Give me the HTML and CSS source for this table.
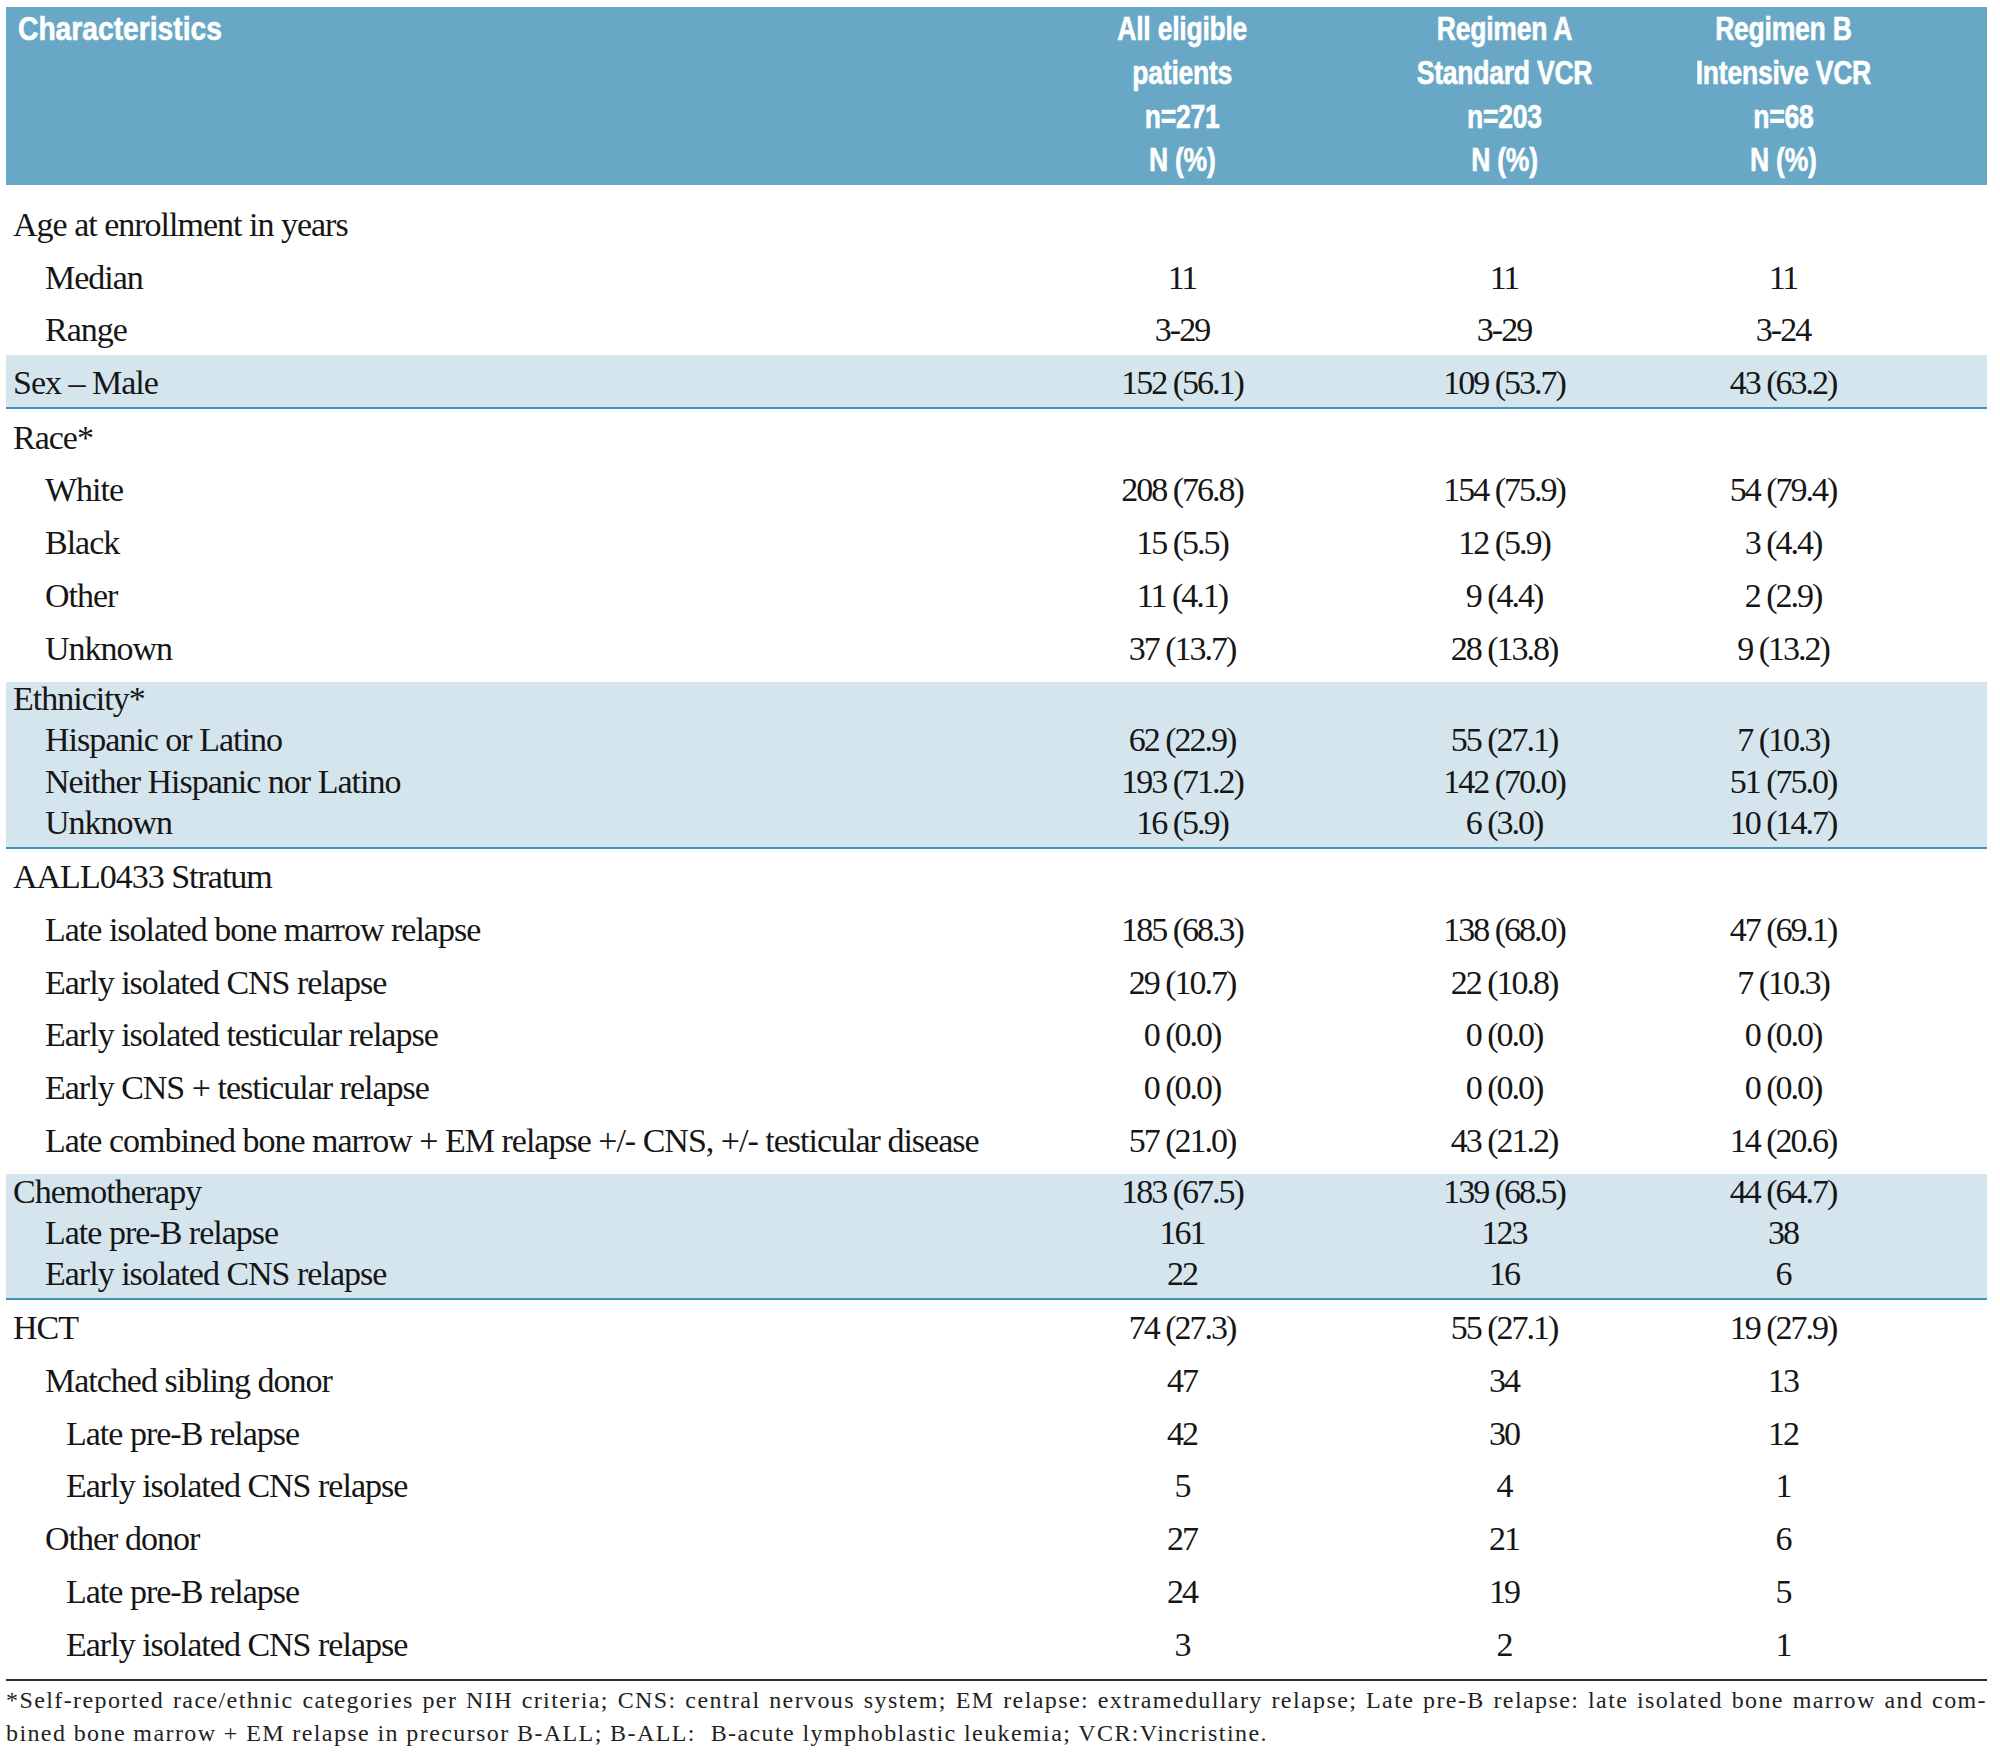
FILE: index.html
```html
<!DOCTYPE html>
<html lang="en">
<head>
<meta charset="utf-8">
<title>Patient characteristics</title>
<link rel="stylesheet" href="styles.css">
</head>
<body>
<div class="page">
  <div class="tbl">
    <div class="row head">
      <div class="lab"><span class="cond left">Characteristics</span></div>
      <div class="val"><span class="cond">All eligible<br>patients<br>n=271<br>N (%)</span></div>
      <div class="val"><span class="cond">Regimen A<br>Standard VCR<br>n=203<br>N (%)</span></div>
      <div class="val"><span class="cond">Regimen B<br>Intensive VCR<br>n=68<br>N (%)</span></div>
    </div>

    <div class="grp top-gap">
      <div class="row"><div class="lab">Age at enrollment in years</div><div class="val"></div><div class="val"></div><div class="val"></div></div>
      <div class="row"><div class="lab i1">Median</div><div class="val">11</div><div class="val">11</div><div class="val">11</div></div>
      <div class="row"><div class="lab i1">Range</div><div class="val">3-29</div><div class="val">3-29</div><div class="val">3-24</div></div>
    </div>

    <div class="grp band">
      <div class="row"><div class="lab">Sex – Male</div><div class="val">152 (56.1)</div><div class="val">109 (53.7)</div><div class="val">43 (63.2)</div></div>
    </div>

    <div class="grp bottom-gap">
      <div class="row"><div class="lab">Race*</div><div class="val"></div><div class="val"></div><div class="val"></div></div>
      <div class="row"><div class="lab i1">White</div><div class="val">208 (76.8)</div><div class="val">154 (75.9)</div><div class="val">54 (79.4)</div></div>
      <div class="row"><div class="lab i1">Black</div><div class="val">15 (5.5)</div><div class="val">12 (5.9)</div><div class="val">3 (4.4)</div></div>
      <div class="row"><div class="lab i1">Other</div><div class="val">11 (4.1)</div><div class="val">9 (4.4)</div><div class="val">2 (2.9)</div></div>
      <div class="row"><div class="lab i1">Unknown</div><div class="val">37 (13.7)</div><div class="val">28 (13.8)</div><div class="val">9 (13.2)</div></div>
    </div>

    <div class="grp band">
      <div class="row tight"><div class="lab">Ethnicity*</div><div class="val"></div><div class="val"></div><div class="val"></div></div>
      <div class="row tight"><div class="lab i1">Hispanic or Latino</div><div class="val">62 (22.9)</div><div class="val">55 (27.1)</div><div class="val">7 (10.3)</div></div>
      <div class="row tight"><div class="lab i1">Neither Hispanic nor Latino</div><div class="val">193 (71.2)</div><div class="val">142 (70.0)</div><div class="val">51 (75.0)</div></div>
      <div class="row tight"><div class="lab i1">Unknown</div><div class="val">16 (5.9)</div><div class="val">6 (3.0)</div><div class="val">10 (14.7)</div></div>
    </div>

    <div class="grp bottom-gap">
      <div class="row"><div class="lab">AALL0433 Stratum</div><div class="val"></div><div class="val"></div><div class="val"></div></div>
      <div class="row"><div class="lab i1">Late isolated bone marrow relapse</div><div class="val">185 (68.3)</div><div class="val">138 (68.0)</div><div class="val">47 (69.1)</div></div>
      <div class="row"><div class="lab i1">Early isolated CNS relapse</div><div class="val">29 (10.7)</div><div class="val">22 (10.8)</div><div class="val">7 (10.3)</div></div>
      <div class="row"><div class="lab i1">Early isolated testicular relapse</div><div class="val">0 (0.0)</div><div class="val">0 (0.0)</div><div class="val">0 (0.0)</div></div>
      <div class="row"><div class="lab i1">Early CNS + testicular relapse</div><div class="val">0 (0.0)</div><div class="val">0 (0.0)</div><div class="val">0 (0.0)</div></div>
      <div class="row"><div class="lab i1">Late combined bone marrow + EM relapse +/- CNS, +/- testicular disease</div><div class="val">57 (21.0)</div><div class="val">43 (21.2)</div><div class="val">14 (20.6)</div></div>
    </div>

    <div class="grp band">
      <div class="row tight"><div class="lab">Chemotherapy</div><div class="val">183 (67.5)</div><div class="val">139 (68.5)</div><div class="val">44 (64.7)</div></div>
      <div class="row tight"><div class="lab i1">Late pre-B relapse</div><div class="val">161</div><div class="val">123</div><div class="val">38</div></div>
      <div class="row tight"><div class="lab i1">Early isolated CNS relapse</div><div class="val">22</div><div class="val">16</div><div class="val">6</div></div>
    </div>

    <div class="grp bottom-gap last">
      <div class="row"><div class="lab">HCT</div><div class="val">74 (27.3)</div><div class="val">55 (27.1)</div><div class="val">19 (27.9)</div></div>
      <div class="row"><div class="lab i1">Matched sibling donor</div><div class="val">47</div><div class="val">34</div><div class="val">13</div></div>
      <div class="row"><div class="lab i2">Late pre-B relapse</div><div class="val">42</div><div class="val">30</div><div class="val">12</div></div>
      <div class="row"><div class="lab i2">Early isolated CNS relapse</div><div class="val">5</div><div class="val">4</div><div class="val">1</div></div>
      <div class="row"><div class="lab i1">Other donor</div><div class="val">27</div><div class="val">21</div><div class="val">6</div></div>
      <div class="row"><div class="lab i2">Late pre-B relapse</div><div class="val">24</div><div class="val">19</div><div class="val">5</div></div>
      <div class="row"><div class="lab i2">Early isolated CNS relapse</div><div class="val">3</div><div class="val">2</div><div class="val">1</div></div>
    </div>
  </div>

  <div class="foot">
    <p class="foot-line full">*Self-reported race/ethnic categories per NIH criteria; CNS: central nervous system; EM relapse: extramedullary relapse; Late pre-B relapse: late isolated bone marrow and com-</p>
    <p class="foot-line">bined bone marrow + EM relapse in precursor B-ALL; B-ALL:&nbsp; B-acute lymphoblastic leukemia; VCR:Vincristine.</p>
  </div>
</div>
</body>
</html>
```

FILE: styles.css
```css
html, body {
  margin: 0;
  padding: 0;
  background: #ffffff;
}

.page {
  width: 1981px;
  padding: 7px 13px 0 6px;
  font-family: "Liberation Serif", "Times New Roman", serif;
  color: #161616;
}

.tbl {
  display: flex;
  flex-direction: column;
}

.row {
  display: grid;
  grid-template-columns: 1014px 324px 320px 238px;
  padding-right: 85px;
  box-sizing: border-box;
  height: 52.7px;
  padding-top: 11.5px;
  font-size: 34px;
  line-height: 34px;
  white-space: nowrap;
}

.row.tight {
  height: 41.3px;
  padding-top: 0.5px;
}

.lab {
  padding-left: 7px;
  letter-spacing: -1px;
}

.lab.i1 {
  padding-left: 39px;
}

.lab.i2 {
  padding-left: 60px;
}

.val {
  text-align: center;
  letter-spacing: -2px;
}

/* header */
.row.head {
  height: 177.5px;
  padding-top: 0;
  background: #68a8c6;
  color: #ffffff;
  font-family: "Liberation Sans", Arial, sans-serif;
  font-weight: bold;
  font-size: 34px;
  line-height: 43.8px;
}

.row.head .lab {
  padding-left: 12px;
  letter-spacing: 0;
}

.row.head .val {
  letter-spacing: 0;
}

.cond {
  display: inline-block;
  transform: scaleX(0.78);
  transform-origin: center top;
  letter-spacing: -0.3px;
  -webkit-text-stroke: 0.6px #ffffff;
}

.cond.left {
  transform: scaleX(0.83);
  transform-origin: left top;
  letter-spacing: 0;
}

/* groups */
.grp.top-gap {
  padding-top: 12px;
}

.grp.bottom-gap {
  padding-bottom: 9px;
}

.grp.last {
  padding-bottom: 10.5px;
  border-bottom: 2px solid #2e2e2e;
}

.grp.band {
  background: #d5e5ee;
  border-bottom: 2px solid #3f95bf;
}

/* footnote */
.foot {
  padding-top: 3px;
  font-size: 24px;
  line-height: 33px;
  letter-spacing: 1.4px;
  color: #222222;
}

.foot-line {
  margin: 0;
  white-space: nowrap;
}

.foot-line.full {
  text-align: justify;
  text-align-last: justify;
  white-space: normal;
}
```
